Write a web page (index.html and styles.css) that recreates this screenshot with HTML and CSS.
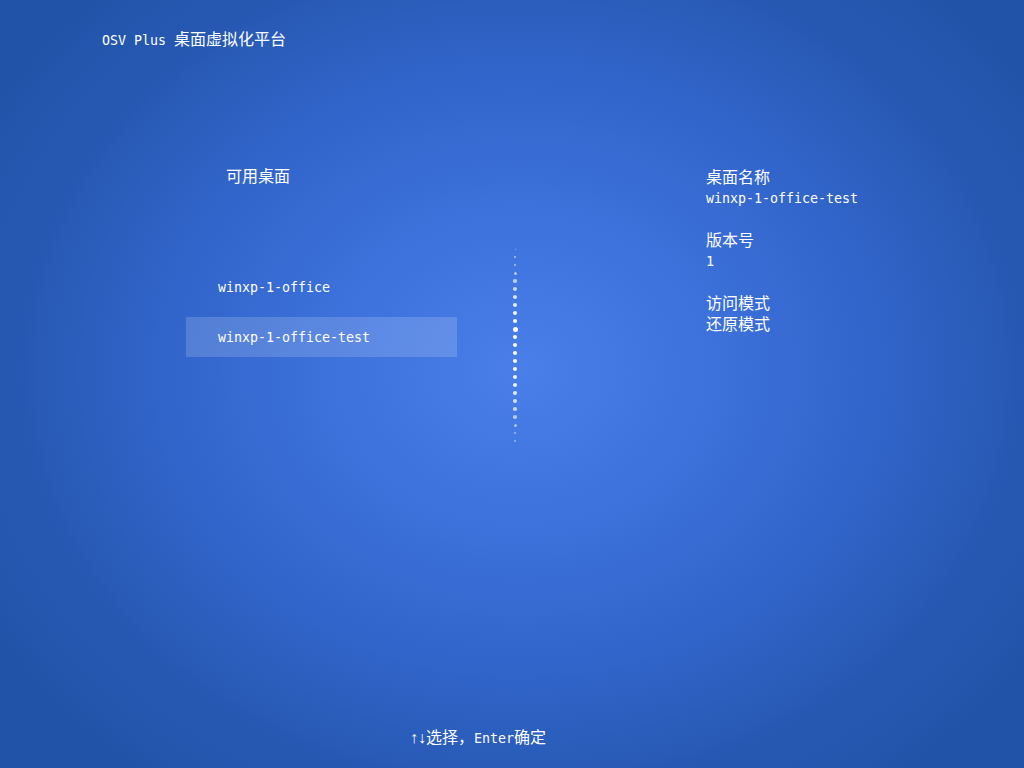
FILE: index.html
```html
<!DOCTYPE html>
<html lang="zh-CN">
<head>
<meta charset="utf-8">
<title>OSV Plus 桌面虚拟化平台</title>
<link rel="stylesheet" href="styles.css">
</head>
<body>
<div class="screen">
  <header class="title"><span class="lat">OSV Plus </span><span class="cjk">桌面虚拟化平台</span></header>
  <main class="main">
    <section class="list-col">
      <div class="heading cjk">可用桌面</div>
      <ul class="list">
        <li class="item lat">winxp-1-office</li>
        <li class="item selected lat">winxp-1-office-test</li>
      </ul>
    </section>
    <div class="divider">
      <span class="dot" style="--s:1px;--o:.45"></span>
      <span class="dot" style="--s:1.5px;--o:.5"></span>
      <span class="dot" style="--s:2.5px;--o:.55"></span>
      <span class="dot" style="--s:3px;--o:.6"></span>
      <span class="dot" style="--s:3.5px;--o:.65"></span>
      <span class="dot" style="--s:4px;--o:.72"></span>
      <span class="dot" style="--s:4px;--o:.8"></span>
      <span class="dot" style="--s:4.5px;--o:.88"></span>
      <span class="dot" style="--s:4.5px;--o:.94"></span>
      <span class="dot" style="--s:4.5px;--o:1"></span>
      <span class="dot" style="--s:5px;--o:1"></span>
      <span class="dot" style="--s:4.5px;--o:1"></span>
      <span class="dot" style="--s:4.5px;--o:1"></span>
      <span class="dot" style="--s:4.5px;--o:1"></span>
      <span class="dot" style="--s:4.5px;--o:1"></span>
      <span class="dot" style="--s:4.5px;--o:.97"></span>
      <span class="dot" style="--s:4.5px;--o:.94"></span>
      <span class="dot" style="--s:4px;--o:.9"></span>
      <span class="dot" style="--s:4px;--o:.84"></span>
      <span class="dot" style="--s:4px;--o:.76"></span>
      <span class="dot" style="--s:3.5px;--o:.68"></span>
      <span class="dot" style="--s:3.5px;--o:.6"></span>
      <span class="dot" style="--s:3px;--o:.55"></span>
      <span class="dot" style="--s:2.5px;--o:.5"></span>
      <span class="dot" style="--s:2px;--o:.45"></span>
    </div>
    <section class="detail-col">
      <div class="group">
        <div class="label cjk">桌面名称</div>
        <div class="value lat">winxp-1-office-test</div>
      </div>
      <div class="group">
        <div class="label cjk">版本号</div>
        <div class="value lat">1</div>
      </div>
      <div class="group">
        <div class="label cjk">访问模式</div>
        <div class="label cjk">还原模式</div>
      </div>
    </section>
  </main>
  <footer class="hint"><span class="arrow">↑↓</span><span class="cjk">选择，</span><span class="lat">Enter</span><span class="cjk">确定</span></footer>
</div>
</body>
</html>
```

FILE: styles.css
```css
html, body {
  margin: 0;
  padding: 0;
}
body {
  width: 1024px;
  height: 768px;
  overflow: hidden;
  color: #ffffff;
  font-family: "DejaVu Sans Mono", "Noto Sans CJK SC", monospace;
}
.screen {
  width: 1024px;
  height: 768px;
  display: flex;
  flex-direction: column;
  background: radial-gradient(ellipse 620px 520px at 520px 370px, #4a7fe9 0%, #3f74df 25%, #3366cc 55%, #2759b4 80%, #2154a8 100%);
  background-color: #2154a8;
}
.lat {
  font-family: "DejaVu Sans Mono", monospace;
  font-size: 13.3px;
}
.cjk {
  font-family: "Noto Sans CJK SC", sans-serif;
  font-size: 16px;
}
.arrow {
  font-family: "Liberation Sans", sans-serif;
  font-size: 16px;
}
.title {
  padding: 28px 0 0 102px;
  height: 21px;
  line-height: 21px;
  white-space: pre;
}
.main {
  flex: 1;
  display: flex;
  padding-top: 115px;
}
.list-col {
  margin-left: 186px;
  width: 271px;
}
.heading {
  padding: 1px 0 0 40px;
  line-height: 21px;
}
.list {
  list-style: none;
  margin: 81px 0 0 0;
  padding: 0;
  display: flex;
  flex-direction: column;
  gap: 10px;
}
.item {
  height: 38px;
  line-height: 38px;
  padding: 2px 0 0 32px;
}
.item.selected {
  background: rgba(255, 255, 255, 0.16);
}
.divider {
  width: 249px;
  padding: 81px 0 0 56px;
  box-sizing: border-box;
  display: flex;
  flex-direction: column;
}
.dot {
  width: 4px;
  height: 8px;
  display: flex;
  align-items: center;
  justify-content: center;
}
.dot::before {
  content: "";
  flex: none;
  width: var(--s);
  height: var(--s);
  border-radius: 50%;
  background: #fff;
  opacity: var(--o);
}
.detail-col {
  display: flex;
  flex-direction: column;
  gap: 21px;
  padding-top: 2px;
}
.label, .value {
  line-height: 21px;
}
.value {
  position: relative;
  top: 1px;
}
.hint {
  padding: 0 0 19px 410px;
  line-height: 21px;
}
```
